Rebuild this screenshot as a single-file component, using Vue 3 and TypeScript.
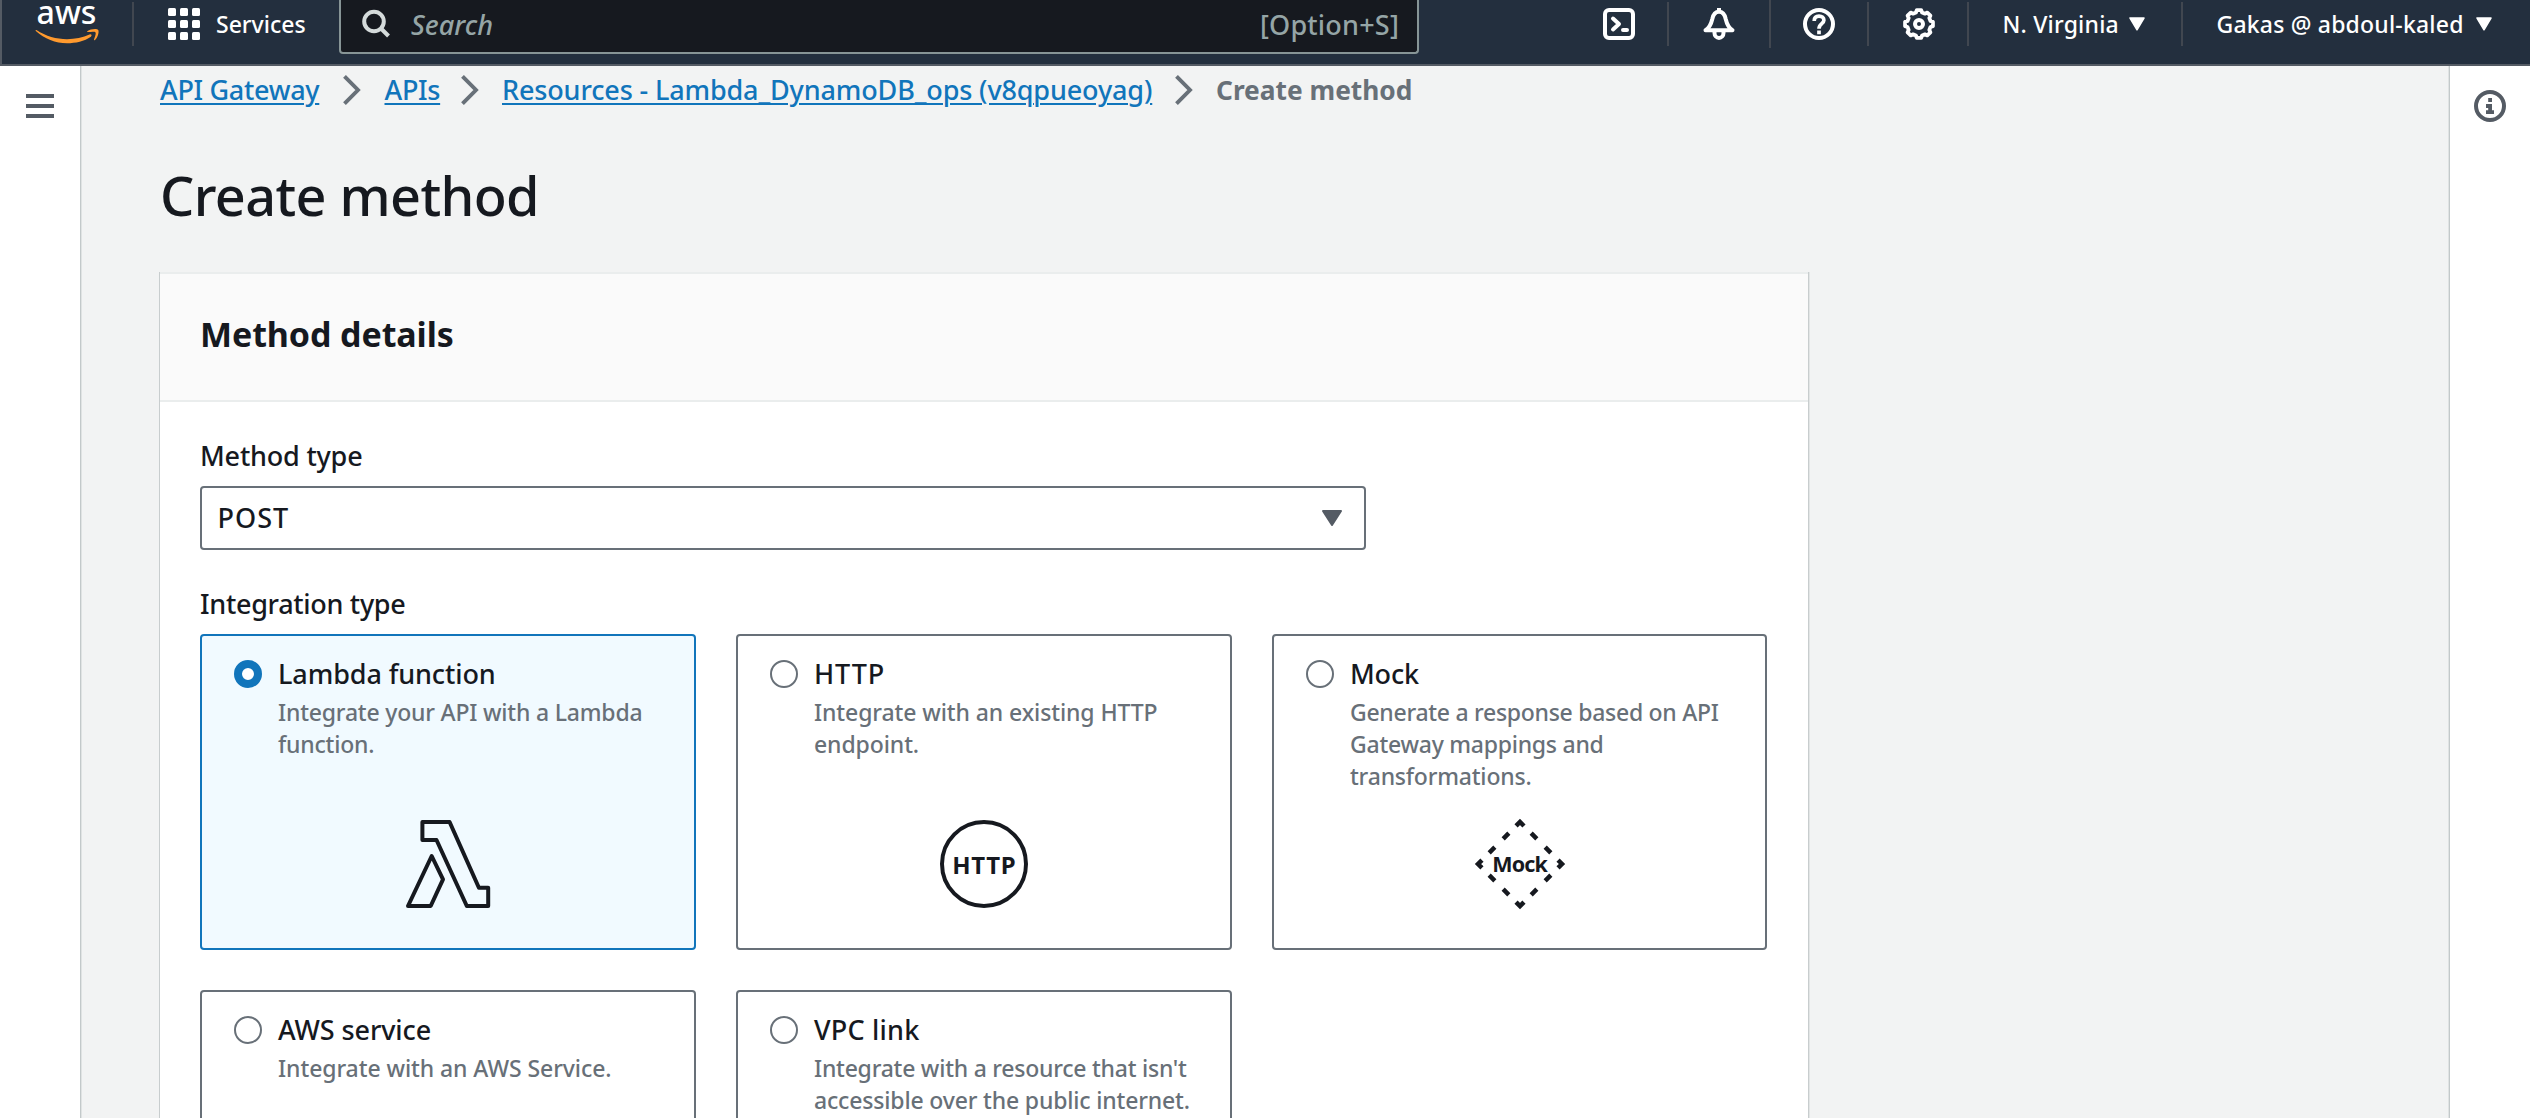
<script setup lang="ts">
import { ref } from 'vue'

interface Line {
  text: string
  tracking: number
}
interface Integration {
  id: string
  title: Line
  lines: Line[]
}

const line = (text: string, tracking: number): Line => ({ text, tracking })

const integrations: Integration[] = [
  { id: 'lambda', title: line('Lambda function', -0.1), lines: [line('Integrate your API with a Lambda', -0.2), line('function.', -0.2)] },
  { id: 'http', title: line('HTTP', 0.9), lines: [line('Integrate with an existing HTTP', -0.1), line('endpoint.', -0.1)] },
  { id: 'mock', title: line('Mock', -0.2), lines: [line('Generate a response based on API', -0.28), line('Gateway mappings and', -0.25), line('transformations.', -0.2)] },
  { id: 'aws', title: line('AWS service', -0.1), lines: [line('Integrate with an AWS Service.', -0.08)] },
  { id: 'vpc', title: line('VPC link', 0.2), lines: [line("Integrate with a resource that isn't", -0.24), line('accessible over the public internet.', -0.17)] },
]
const selected = ref('lambda')

const crumbs = ['API Gateway', 'APIs', 'Resources - Lambda_DynamoDB_ops (v8qpueoyag)']

// Outline of an eight-toothed cog centred on (16, 16)
function cogPath(): string {
  const pts: string[] = []
  for (let i = 0; i < 8; i++) {
    const steps: [number, number][] = [[-15, 11.9], [-9, 14.1], [9, 14.1], [15, 11.9]]
    for (const [d, r] of steps) {
      const a = ((i * 45 + d - 90) * Math.PI) / 180
      pts.push(`${(16 + r * Math.cos(a)).toFixed(2)} ${(16 + r * Math.sin(a)).toFixed(2)}`)
    }
  }
  return `M${pts.join('L')}Z`
}
const cog = cogPath()
</script>

<template>
  <div class="page">
    <header class="topbar">
      <svg class="logo" width="130" height="48" viewBox="2 0 130 48">
        <text x="36.500" y="24.300" textLength="60" lengthAdjust="spacingAndGlyphs" class="logo-text">aws</text>
        <path fill="#ff9a2e" d="M36.4 30.1C46 36.5 56.500 39.200 67 39.200c8 0 16-1.900 22.500-4.700 1.800-.8 2.900 1 1.400 2.200C84.500 41.200 75.500 43.200 67 43.200 55.500 43.200 44.500 38.800 35.800 31c-.5-.6 0-1.200.6-.9z" />
        <path fill="#ff9a2e" d="M87.300 31.200c3-2.300 9.700-2.900 10.900-1.300 1.200 1.600-.4 7.600-3.200 10-.7.600-1.300.300-1-.500.9-2.300 2.200-5.900 1.500-7-.8-1.100-4.700-.6-7.400-.3-.8.100-1.300-.4-.8-.9z" />
      </svg>
      <i class="rule"></i>
      <div class="services">
        <svg width="32" height="32" viewBox="0 0 32 32" fill="#fff">
          <template v-for="r in 3" :key="r">
            <rect v-for="c in 3" :key="c" :x="(c - 1) * 12" :y="(r - 1) * 12" width="8" height="8" rx="1.5" />
          </template>
        </svg>
        <span>Services</span>
      </div>
      <div class="search">
        <svg width="30" height="30" viewBox="0 0 30 30" fill="none" stroke="#d5dbdb" stroke-width="4">
          <circle cx="12" cy="12.500" r="9.800" />
          <path d="M18.500 19l8 8" />
        </svg>
        <span class="search-label">Search</span>
        <span class="search-key">[Option+S]</span>
      </div>

      <nav class="tools">
        <div class="tool first">
          <svg class="glyph" viewBox="0 0 32 32"><rect x="2" y="2" width="28" height="28" rx="4" /><path stroke-linecap="round" stroke-linejoin="round" d="M10 10.500l6 5.500-6 5.500M20 22h4" /></svg>
        </div>
        <i class="rule"></i>
        <div class="tool bell">
          <svg class="glyph" viewBox="0 0 32 32"><path stroke-linejoin="round" d="M2.500 22.300C7 19.500 8.500 14.500 9.300 11 10.300 6 12.500 3.800 16 3.800s5.700 2.200 6.700 7.200c.8 3.500 2.300 8.500 6.800 11.300z" /><path d="M16 0v4M11.500 22.500v2.500a4.500 5 0 0 0 9 0v-2.500" /></svg>
        </div>
        <i class="rule tall"></i>
        <div class="tool help">
          <svg class="glyph" viewBox="0 0 32 32"><circle cx="16" cy="16" r="14" /><path stroke-width="3.700" d="M11.200 13C11.200 9.800 13 8.100 16 8.100s4.900 1.700 4.900 4.200c0 3.400-4.900 3.400-4.900 8.400M16 22.600v3.600" /></svg>
        </div>
        <i class="rule"></i>
        <div class="tool gear">
          <svg class="glyph" viewBox="0 0 32 32"><path :d="cog" stroke-width="3.800" stroke-linejoin="round" /><circle cx="16" cy="16" r="4" /></svg>
        </div>
        <i class="rule"></i>
        <div class="menu region">
          <span>N. Virginia</span>
          <svg class="caret" viewBox="0 0 16 14"><path d="M1 1h14L8 12.800z" /></svg>
        </div>
        <i class="rule"></i>
        <div class="menu account">
          <span>Gakas @ abdoul-kaled</span>
          <svg class="caret" viewBox="0 0 16 14"><path d="M1 1h14L8 12.800z" /></svg>
        </div>
      </nav>
    </header>

    <div class="body">
      <aside class="side left">
        <svg width="28" height="24" viewBox="0 0 28 24" fill="#545b64"><path d="M0 0h28v4H0zM0 10h28v4H0zM0 20h28v4H0z" /></svg>
      </aside>

      <main class="content">
        <nav class="crumbs">
          <template v-for="(c, i) in crumbs" :key="c">
            <span :class="'slot c' + i"><a class="crumb">{{ c }}</a></span>
            <svg class="chev" width="18" height="30" viewBox="0 0 18 30"><path d="M1.500 1.300L15 15 1.500 28.700" /></svg>
          </template>
          <span class="current">Create method</span>
        </nav>
        <h1>Create method</h1>

        <section class="panel">
          <header class="panel-head"><h2>Method details</h2></header>
          <div class="panel-body">
            <label class="field type">Method type</label>
            <div class="select">
              <span>POST</span>
              <svg width="20" height="16" viewBox="0 0 20 16"><path d="M1 1h18l-9 14z" fill="#545b64" stroke="#545b64" stroke-width="2" stroke-linejoin="round" /></svg>
            </div>
            <label class="field integration">Integration type</label>
            <div class="tiles">
              <div v-for="t in integrations" :key="t.id" :class="['tile', { on: t.id === selected }]" @click="selected = t.id">
                <div class="tile-row">
                  <span class="radio"></span>
                  <div class="tile-text">
                    <div class="tile-title" :style="{ letterSpacing: t.title.tracking + 'px' }">{{ t.title.text }}</div>
                    <div v-for="l in t.lines" :key="l.text" class="tile-desc" :style="{ letterSpacing: l.tracking + 'px' }">{{ l.text }}</div>
                  </div>
                </div>
                <svg v-if="t.id === 'lambda'" class="art" viewBox="0 0 88 88">
                  <path d="M18.400 2H45.600L74.900 67.700H84.200V86H62.800L32.500 20H18.400zM27.700 36L39 59.300 26.700 86H4z" />
                </svg>
                <svg v-else-if="t.id === 'http'" class="art" viewBox="0 0 88 88">
                  <circle cx="44" cy="44" r="42" />
                  <text x="44" y="54" textLength="63.500" class="art-http">HTTP</text>
                </svg>
                <svg v-else-if="t.id === 'mock'" class="art" viewBox="0 0 88 88">
                  <path class="dashes" d="M51.140 9.140L86 44 44 86 2 44 44 2z" />
                  <text x="44" y="52.300" textLength="55.500" class="art-mock">Mock</text>
                </svg>
              </div>
            </div>
          </div>
        </section>
      </main>

      <aside class="side right">
        <svg width="32" height="32" viewBox="0 0 32 32" fill="none" stroke="#545b64" stroke-width="4"><circle cx="16" cy="16" r="14" /><path fill="#545b64" stroke="none" d="M14.200 8H18v4h-3.800zM12 14h6v6.200h2V24h-8v-3.800h2.200V18H12z" /></svg>
      </aside>
    </div>
  </div>
</template>

<style>
body { margin: 0; overflow: hidden; }
</style>

<style scoped>
.page {
  width: 2530px;
  height: 1118px;
  overflow: hidden;
  display: flex;
  flex-direction: column;
  font-family: "Noto Sans", "Open Sans", sans-serif;
  font-weight: 500;
  color: #16191f;
  background: #f2f3f3;
}
svg { display: block; flex: none; overflow: visible; }

.topbar {
  box-sizing: border-box;
  height: 66px;
  flex: none;
  display: flex;
  align-items: flex-start;
  background: #232f3e;
  border-left: 2px solid #545b64;
  border-bottom: 2px solid #545b64;
  color: #fff;
  font-size: 23px;
}
.logo-text { font: 500 33px "Noto Sans", sans-serif; fill: #fff; }
.rule { width: 2px; height: 44px; margin-top: 2px; background: #414750; flex: none; }
.rule.tall { height: 48px; margin-top: 0; }
.services { width: 205px; height: 48px; box-sizing: border-box; padding-left: 34px; display: flex; align-items: center; gap: 16px; }
.search {
  box-sizing: border-box;
  width: 1080px;
  height: 54px;
  border: 2px solid #879596;
  border-top: 0;
  border-radius: 0 0 4px 4px;
  background: #16191f;
  display: flex;
  align-items: center;
  padding: 0 18px 4px 21px;
  color: #95a5a6;
  font-size: 27px;
}
.search-label { font-style: italic; margin-left: 19px; }
.search-key { margin-left: auto; letter-spacing: 0.2px; }

.tools { margin-left: auto; display: flex; align-items: flex-start; }
.tool { height: 48px; box-sizing: border-box; display: flex; align-items: center; }
.tool.first { width: 64px; }
.tool.bell { width: 100px; padding-left: 34px; }
.tool.help { width: 96px; padding-left: 32px; }
.tool.gear { width: 98px; padding-left: 34px; }
.glyph { width: 32px; height: 32px; fill: none; stroke: #fff; stroke-width: 4; }
.menu { height: 48px; box-sizing: border-box; padding-left: 33.500px; display: flex; align-items: center; white-space: nowrap; letter-spacing: 0.2px; }
.region { width: 212px; }
.region span { width: 126.500px; }
.account { width: 347px; }
.account span { width: 259.500px; }
.caret { width: 16px; height: 14px; fill: #fff; stroke: #fff; stroke-width: 1.500; stroke-linejoin: round; }

.body { flex: 1; min-height: 0; display: flex; }
.side { width: 80px; flex: none; background: #fff; z-index: 1; }
.left { box-shadow: 1px 0 0 #c3c9ca, 2px 0 0 #e0e3e3; }
.right { box-shadow: -1px 0 0 #c3c9ca, -2px 0 0 #e0e3e3; }
.left svg { margin: 28px 0 0 26px; }
.right svg { margin: 24px 0 0 24px; }
.content { flex: 1; padding: 1px 0 0 80px; }

.crumbs { display: flex; align-items: center; height: 45px; font-size: 27px; white-space: nowrap; }
.slot { flex: none; }
.crumb { color: #1175bb; text-decoration: underline; text-decoration-thickness: 2px; text-underline-offset: 3px; }
.c0 { width: 183px; letter-spacing: -0.3px; }
.c1 { width: 76px; letter-spacing: -0.3px; }
.c2 { width: 672.500px; letter-spacing: -0.14px; }
.chev { margin-right: 23.500px; fill: none; stroke: #687078; stroke-width: 3.900; }
.current { color: #687078; font-weight: 700; font-size: 26.300px; }

h1 { margin: 46px 0 0; font-size: 54px; line-height: 74px; font-weight: 500; letter-spacing: -0.6px; }

.panel {
  width: 1648px;
  height: 900px;
  margin-top: 40px;
  background: #fff;
  border-top: 2px solid #eaeded;
  box-shadow: 1px 0 0 #c8cdce, 2px 0 0 #e2e5e5, -1px 0 0 #c8cdce;
}
.panel-head { box-sizing: border-box; height: 128px; padding: 40px 40px 0; background: #fafafa; border-bottom: 2px solid #eaeded; }
h2 { margin: 0; font-size: 34px; line-height: 40px; font-weight: 700; letter-spacing: -0.1px; }
.panel-body { padding: 32px 40px 0; font-size: 27px; }
.field { display: block; line-height: 44px; }
.type { margin-bottom: 8px; letter-spacing: -0.2px; }
.select {
  box-sizing: border-box;
  width: 1166px;
  height: 64px;
  border: 2px solid #687078;
  border-radius: 4px;
  padding: 0 22px 0 15.500px;
  display: flex;
  align-items: center;
  justify-content: space-between;
}
.select span { letter-spacing: 1px; padding-bottom: 2px; }
.integration { margin: 32px 0 8px; letter-spacing: -0.300px; }
.tiles { display: grid; grid-template-columns: 496px 496px 495px; gap: 40px; }
.tile {
  box-sizing: border-box;
  height: 316px;
  border: 2px solid #687078;
  border-radius: 4px;
  padding: 16px 0 40px 32px;
  display: flex;
  flex-direction: column;
  justify-content: space-between;
}
.tile.on { border-color: #1175bb; background: #f1faff; }
.tile-row { display: flex; gap: 16px; }
.radio { box-sizing: border-box; width: 28px; height: 28px; margin-top: 8px; border: 2px solid #687078; border-radius: 50%; background: #fff; flex: none; }
.on .radio { border: 8px solid #1175bb; }
.tile-text { white-space: nowrap; }
.tile-title { line-height: 44px; }
.tile-desc { font-size: 23px; line-height: 32px; color: #687078; }
.art { width: 88px; height: 88px; margin-left: 170px; fill: none; stroke: #16191f; stroke-width: 4; stroke-linejoin: round; }
.art text { font-family: "Noto Sans", sans-serif; font-weight: 700; fill: #16191f; stroke: none; text-anchor: middle; }
.art .dashes { stroke-width: 4.500; stroke-linejoin: miter; stroke-dasharray: 8 11.800 8 10.200 11.200 10.200; stroke-dashoffset: -5.700; }
.art-http { font-size: 24px; }
.art-mock { font-size: 21.500px; }
</style>
